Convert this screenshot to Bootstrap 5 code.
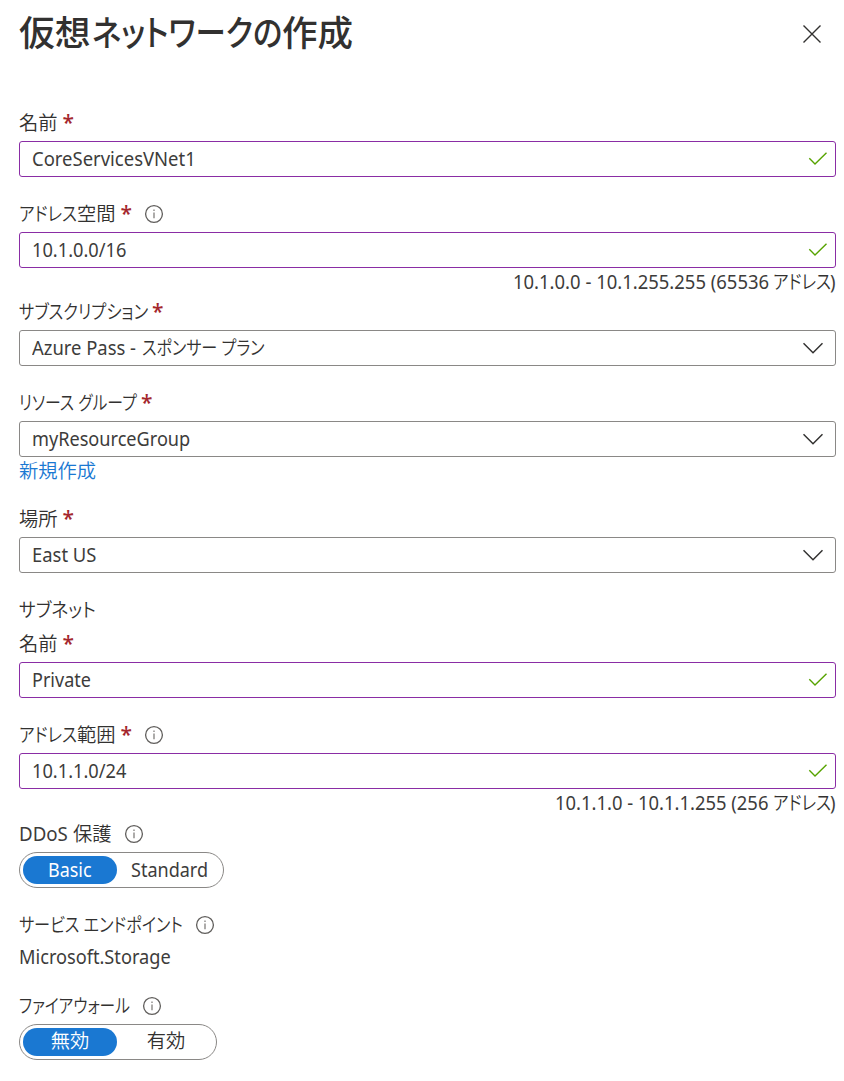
<!DOCTYPE html>
<html lang="ja">
<head>
<meta charset="utf-8">
<meta name="viewport" content="width=device-width, initial-scale=1">
<title>仮想ネットワークの作成</title>
<link href="https://cdn.jsdelivr.net/npm/bootstrap@5.3.0/dist/css/bootstrap.min.css" rel="stylesheet">
<style>
body{font:350 19.3px/26px "Noto Sans","Noto Sans CJK JP",sans-serif;color:#323130;background:#fff;font-feature-settings:"palt"}
.blade{padding:0 8px 0 19px;height:1081px}
.blade-head{height:105px;padding:13px 14px 0 0}
.blade-title{font-size:35.5px;line-height:38px;font-weight:500}
.close-mark{margin-top:11px}
/* condensed run: --w is the set width, --s the horizontal scale */
.cond{display:inline-block;white-space:pre;width:var(--w);transform:scaleX(var(--s));transform-origin:0 50%;flex:none}
.latin{font-weight:400;color:#3d3c3b}
.field-label{height:36px;padding-bottom:1px}
.req{color:#a4262c;font-size:21px;font-weight:500;width:22px;padding-left:5px;height:24px;line-height:22px}
.info-mark{width:20px;height:20px;margin-left:12px}
.req + .info-mark{margin-left:6px}
.box{height:36px;border:1px solid #8a8886;border-radius:3px;padding:0 12px}
.box.valid{border-color:#8a2da5}
.box.valid svg{margin-right:-5px}
.hint{height:26px;padding-top:1px}
.hint-link{margin-bottom:18px}
.link-new{color:#1a78d2;text-decoration:none}
.section-name{height:34px;padding-top:2px}
.value-line{height:45px;padding-top:1px}
.toggle{height:36px;border:1px solid #8a8886;border-radius:18px;padding:3px}
.toggle .seg{height:28px;border-radius:14px}
.toggle .seg.kanji{padding-bottom:2px}
.toggle .on{width:94px;background:#1a78d2;color:#fff}
.toggle .on .latin{color:#fff}
.toggle .seg:not(.on){padding-left:2px}
.gap19{margin-bottom:19px}
</style>
</head>
<body>
<svg class="d-none">
<symbol id="info" viewBox="0 0 20 20"><circle cx="10" cy="10" r="8.4" fill="none" stroke="#605e5c" stroke-width="1.3"/><path d="M10 8.4V14.3M10 5.6V7" stroke="#8a8886" stroke-width="1.4"/></symbol>
<symbol id="check" viewBox="0 0 20 14"><path d="M1.3 6.3L7 12L18.5 .8" fill="none" stroke="#57a300" stroke-width="1.4"/></symbol>
<symbol id="chev" viewBox="0 0 20 12"><path d="M.5 1.3L10 10.8L19.5 1.3" fill="none" stroke="#323130" stroke-width="1.5"/></symbol>
</svg>
<main class="blade">
<header class="blade-head d-flex justify-content-between align-items-start">
<h1 class="blade-title d-flex m-0"><span class="cond" style="--w:73px;--s:1.01">仮想</span><span class="cond" style="--w:190px;--s:.857">ネットワークの</span><span>作成</span></h1>
<svg width="20" height="20" class="close-mark" viewBox="0 0 20 20"><path d="M1.5 1.5L18.5 18.5M18.5 1.5L1.5 18.5" stroke="#323130" stroke-width="1.4"/></svg>
</header>

<label class="field-label d-flex align-items-center"><span>名前</span><span class="req">*</span></label>
<div class="box valid d-flex align-items-center justify-content-between gap19"><span class="cond latin" style="--w:164px;--s:.958">CoreServicesVNet1</span><svg width="20" height="14"><use href="#check"/></svg></div>

<label class="field-label d-flex align-items-center"><span class="cond" style="--w:58px;--s:.858">アドレス</span><span>空間</span><span class="req">*</span><svg class="info-mark"><use href="#info"/></svg></label>
<div class="box valid d-flex align-items-center justify-content-between"><span class="cond latin" style="--w:95px;--s:.945">10.1.0.0/16</span><svg width="20" height="14"><use href="#check"/></svg></div>
<div class="hint d-flex justify-content-end"><span class="cond latin" style="--w:260px;--s:.957">10.1.0.0 - 10.1.255.255 (65536 </span><span class="cond" style="--w:57px;--s:.858">アドレス</span><span class="cond latin" style="--w:6px;--s:.95">)</span></div>

<label class="field-label d-flex align-items-center"><span class="cond" style="--w:128px;--s:.846">サブスクリプション</span><span class="req">*</span></label>
<div class="box d-flex align-items-center justify-content-between gap19"><span class="d-flex"><span class="cond latin" style="--w:110px;--s:.955">Azure Pass - </span><span class="cond" style="--w:124px;--s:.835">スポンサー プラン</span></span><svg width="20" height="12"><use href="#chev"/></svg></div>

<label class="field-label d-flex align-items-center"><span class="cond" style="--w:117px;--s:.822">リソース グループ</span><span class="req">*</span></label>
<div class="box d-flex align-items-center justify-content-between"><span class="cond latin" style="--w:159px;--s:.94">myResourceGroup</span><svg width="20" height="12"><use href="#chev"/></svg></div>
<div class="hint hint-link"><a class="link-new" href="#">新規作成</a></div>

<label class="field-label d-flex align-items-center"><span>場所</span><span class="req">*</span></label>
<div class="box d-flex align-items-center justify-content-between gap19"><span class="cond latin" style="--w:65px;--s:.955">East US</span><svg width="20" height="12"><use href="#chev"/></svg></div>

<div class="section-name d-flex align-items-center"><span class="cond" style="--w:77px;--s:.92">サブネット</span></div>
<label class="field-label d-flex align-items-center"><span>名前</span><span class="req">*</span></label>
<div class="box valid d-flex align-items-center justify-content-between gap19"><span class="cond latin" style="--w:59px;--s:.935">Private</span><svg width="20" height="14"><use href="#check"/></svg></div>

<label class="field-label d-flex align-items-center"><span class="cond" style="--w:58px;--s:.858">アドレス</span><span>範囲</span><span class="req">*</span><svg class="info-mark"><use href="#info"/></svg></label>
<div class="box valid d-flex align-items-center justify-content-between"><span class="cond latin" style="--w:95px;--s:.945">10.1.1.0/24</span><svg width="20" height="14"><use href="#check"/></svg></div>
<div class="hint d-flex justify-content-end" style="height:27px"><span class="cond latin" style="--w:218px;--s:.955">10.1.1.0 - 10.1.1.255 (256 </span><span class="cond" style="--w:57px;--s:.858">アドレス</span><span class="cond latin" style="--w:6px;--s:.95">)</span></div>

<div class="field-label d-flex align-items-center"><span class="cond latin" style="--w:54px;--s:.97">DDoS</span><span>保護</span><svg class="info-mark"><use href="#info"/></svg></div>
<div class="toggle d-flex align-items-center gap19" style="width:205px"><span class="seg on d-flex align-items-center justify-content-center"><span class="cond latin" style="--w:44px;--s:.93">Basic</span></span><span class="seg d-flex align-items-center flex-fill justify-content-center"><span class="cond latin" style="--w:78px;--s:.935">Standard</span></span></div>

<div class="field-label d-flex align-items-center"><span class="cond" style="--w:164px;--s:.837">サービス エンドポイント</span><svg class="info-mark"><use href="#info"/></svg></div>
<div class="value-line"><span class="cond latin" style="--w:153px;--s:.942">Microsoft.Storage</span></div>

<div class="field-label d-flex align-items-center"><span class="cond" style="--w:111px;--s:.814">ファイアウォール</span><svg class="info-mark"><use href="#info"/></svg></div>
<div class="toggle d-flex align-items-center" style="width:198px"><span class="seg kanji on d-flex align-items-center justify-content-center">無効</span><span class="seg kanji d-flex align-items-center flex-fill justify-content-center">有効</span></div>
</main>
<script src="https://cdn.jsdelivr.net/npm/bootstrap@5.3.0/dist/js/bootstrap.bundle.min.js"></script>
</body>
</html>
